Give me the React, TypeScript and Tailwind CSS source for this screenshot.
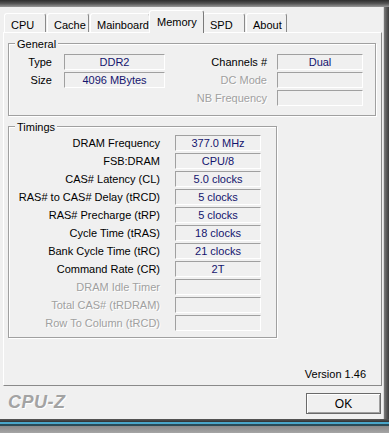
import React from "react";

const timings: [string, string, boolean][] = [
  ["DRAM Frequency", "377.0 MHz", false],
  ["FSB:DRAM", "CPU/8", false],
  ["CAS# Latency (CL)", "5.0 clocks", false],
  ["RAS# to CAS# Delay (tRCD)", "5 clocks", false],
  ["RAS# Precharge (tRP)", "5 clocks", false],
  ["Cycle Time (tRAS)", "18 clocks", false],
  ["Bank Cycle Time (tRC)", "21 clocks", false],
  ["Command Rate (CR)", "2T", false],
  ["DRAM Idle Timer", "", true],
  ["Total CAS# (tRDRAM)", "", true],
  ["Row To Column (tRCD)", "", true],
];

function Field({ value, wide }: { value: string; wide?: boolean }) {
  return (
    <div
      className={`${wide ? "w-[101px]" : "w-[86px]"} h-[16px] shrink-0 border border-t-[#a0a0a0] border-l-[#a0a0a0] border-b-white border-r-white text-center leading-[14px] text-[#14146e]`}
    >
      {value}
    </div>
  );
}

function Label({ text, disabled }: { text: string; disabled?: boolean }) {
  return (
    <span
      className={
        disabled
          ? "text-[#a0a0a0] [text-shadow:1px_1px_0_#ffffff] whitespace-nowrap"
          : "text-black whitespace-nowrap"
      }
    >
      {text}
    </span>
  );
}

function Tab({ label, w, selected }: { label: string; w: string; selected?: boolean }) {
  if (selected) {
    return (
      <div
        className={`${w} h-[23px] -mx-[2px] -mb-px relative z-10 bg-[#f0f0f0] border-t border-l border-white border-r border-r-[#7a7a7a] rounded-t-[3px] flex items-center pl-[7px]`}
      >
        {label}
      </div>
    );
  }
  return (
    <div
      className={`${w} h-[19px] border-t border-l border-white border-r border-r-[#8a8a8a] rounded-t-[3px] flex items-center pl-[6px] pt-[3px]`}
    >
      {label}
    </div>
  );
}

export default function App() {
  return (
    <div className="w-[389px] h-[433px] overflow-hidden flex flex-col bg-[#f0f0f0] font-['Liberation_Sans',Arial,sans-serif] text-[11px] leading-[16px] text-black">
      {/* top chrome */}
      <div className="h-[7px] shrink-0 bg-linear-to-b from-[#2e2e2e] via-[#555555] to-[#9a9a9a]" />
      <div className="flex flex-1">
        {/* window body */}
        <div className="w-[383px] flex flex-col">
          {/* tabs */}
          <div className="h-[25px] flex items-end pl-[4px] gap-[1px]">
            <Tab label="CPU" w="w-[42px]" />
            <Tab label="Cache" w="w-[42px]" />
            <Tab label="Mainboard" w="w-[60px]" />
            <Tab label="Memory" w="w-[55px]" selected />
            <Tab label="SPD" w="w-[42px]" />
            <Tab label="About" w="w-[41px]" />
          </div>
          {/* panel */}
          <div className="ml-[3px] w-[379px] h-[354px] border border-white border-r-[#8a8a8a] border-b-[#8a8a8a] pl-[4px] pt-[10px] flex flex-col">
            {/* General */}
            <div className="relative w-[368px] h-[73px] border border-[#a0a0a0] shadow-[inset_1px_1px_0_#ffffff,1px_1px_0_#ffffff] pt-[10px] pr-[12px] flex flex-col gap-[2px]">
              <span className="absolute -top-[8px] left-[6px] px-[2px] bg-[#f0f0f0]">General</span>
              <div className="flex items-center">
                <div className="w-[43px] text-right"><Label text="Type" /></div>
                <div className="ml-[12px]"><Field value="DDR2" wide /></div>
                <div className="flex-1 text-right"><Label text="Channels #" /></div>
                <div className="ml-[10px]"><Field value="Dual" /></div>
              </div>
              <div className="flex items-center">
                <div className="w-[43px] text-right"><Label text="Size" /></div>
                <div className="ml-[12px]"><Field value="4096 MBytes" wide /></div>
                <div className="flex-1 text-right"><Label text="DC Mode" disabled /></div>
                <div className="ml-[10px]"><Field value="" /></div>
              </div>
              <div className="flex items-center">
                <div className="w-[43px]" />
                <div className="ml-[12px] w-[101px]" />
                <div className="flex-1 text-right"><Label text="NB Frequency" disabled /></div>
                <div className="ml-[10px]"><Field value="" /></div>
              </div>
            </div>
            {/* Timings */}
            <div className="relative mt-[10px] w-[269px] h-[212px] border border-[#a0a0a0] shadow-[inset_1px_1px_0_#ffffff,1px_1px_0_#ffffff] pt-[8px] pr-[15px] flex flex-col gap-[2px]">
              <span className="absolute -top-[8px] left-[6px] px-[2px] bg-[#f0f0f0]">Timings</span>
              {timings.map(([l, v, d]) => (
                <div key={l} className="flex items-center">
                  <div className="flex-1 text-right"><Label text={l} disabled={d} /></div>
                  <div className="ml-[15px]"><Field value={v} /></div>
                </div>
              ))}
            </div>
            <div className="mt-auto pb-[3px] pr-[15px] text-right">Version 1.46</div>
          </div>
          {/* bottom row */}
          <div className="flex-1 flex items-start justify-between pt-[7px] pl-[8px] pr-[2px]">
            <span className="text-[18px] leading-[18px] font-bold italic text-[#a3a3a3] [text-shadow:1px_1px_0_#ffffff] tracking-[0.5px]">
              CPU-Z
            </span>
            <button className="w-[75px] h-[21px] border border-[#6a6a6a] bg-[#f0f0f0] shadow-[inset_1px_1px_0_#ffffff,inset_-1px_-1px_0_#a0a0a0] text-[12px] leading-[18px] text-black">
              OK
            </button>
          </div>
        </div>
        {/* right frame */}
        <div className="w-[6px] border-l border-[#d8d8d8] bg-linear-to-r from-[#7a7a7a] to-[#3e3e3e]" />
      </div>
      {/* bottom chrome */}
      <div className="h-[14px] shrink-0 flex flex-col">
        <div className="h-[3px] bg-linear-to-b from-[#5a5a5a] to-[#2f2f2f]" />
        <div className="h-[2px] bg-[#4aa6c8]" />
        <div className="h-[2px] bg-[#2b4a55]" />
        <div className="flex-1 bg-linear-to-b from-[#8a8a8a] to-[#a5a5a5]" />
      </div>
    </div>
  );
}
